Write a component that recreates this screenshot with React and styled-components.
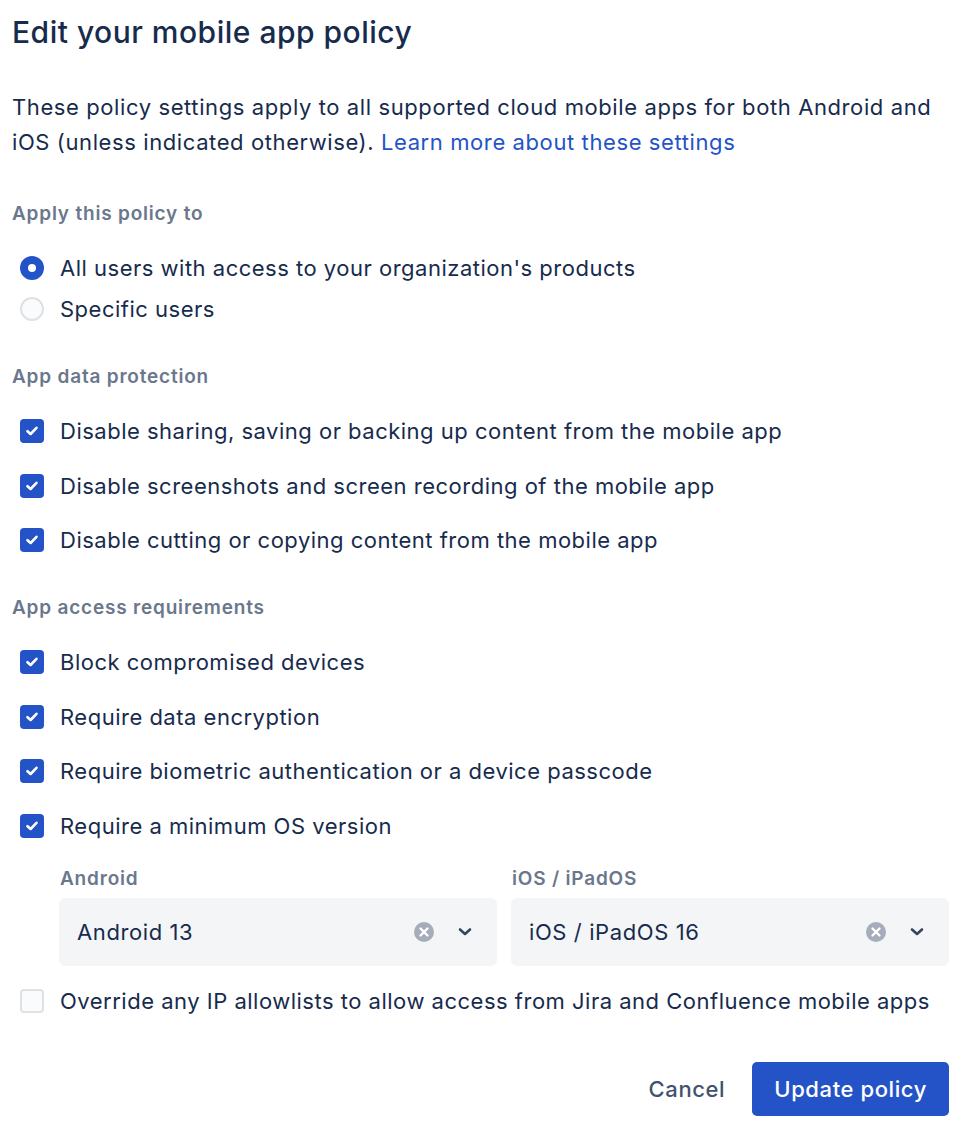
import React from "react";
import styled, { createGlobalStyle } from "styled-components";

const Global = createGlobalStyle`
  html, body { margin: 0; padding: 0; background: #fff; }
  body { font-family: Inter, "Noto Sans", sans-serif; color: #172B4D; -webkit-font-smoothing: antialiased; }
  * { box-sizing: border-box; }
`;

const Page = styled.div`
  width: 965px;
  padding: 14px 16px 0 12px;
  display: flex;
  flex-direction: column;
`;

const Title = styled.h1`
  margin: 0;
  font-size: 30px;
  line-height: 36px;
  font-weight: 500;
  letter-spacing: 0.5px;
  color: #172B4D;
`;

const Intro = styled.p`
  margin: 40px 0 0;
  font-size: 22px;
  line-height: 35px;
  letter-spacing: 0.6px;
  color: #172B4D;
`;

const Link = styled.a`
  color: #2453C8;
  text-decoration: none;
`;

const SectionHeading = styled.h2`
  margin: ${(p) => p.$top}px 0 0;
  font-size: 19px;
  line-height: 24px;
  font-weight: 600;
  letter-spacing: 0.8px;
  color: #6B778C;
`;

const Group = styled.div`
  display: flex;
  flex-direction: column;
  gap: ${(p) => p.$gap}px;
  margin-top: ${(p) => p.$top}px;
`;

const Row = styled.label`
  display: flex;
  align-items: center;
  gap: 16px;
  min-height: 40px;
  padding-left: 8px;
  font-size: 22px;
  line-height: 30px;
  letter-spacing: 0.5px;
  color: #172B4D;
`;

const RadioDot = styled.span`
  width: 24px;
  height: 24px;
  border-radius: 50%;
  flex: none;
  display: flex;
  align-items: center;
  justify-content: center;
  background: ${(p) => (p.$on ? "#2453C8" : "#FAFBFC")};
  border: ${(p) => (p.$on ? "none" : "2px solid #DFE1E6")};
  &::after {
    content: "";
    display: ${(p) => (p.$on ? "block" : "none")};
    width: 8px;
    height: 8px;
    border-radius: 50%;
    background: #fff;
  }
`;

const Box = styled.span`
  width: 24px;
  height: 24px;
  border-radius: 4px;
  flex: none;
  display: flex;
  align-items: center;
  justify-content: center;
  background: ${(p) => (p.$on ? "#2453C8" : "#FAFBFC")};
  border: ${(p) => (p.$on ? "none" : "2px solid #DFE1E6")};
`;

const OSGrid = styled.div`
  display: grid;
  grid-template-columns: 1fr 1fr;
  column-gap: 14px;
  margin: 21px 0 0 47px;
`;

const Field = styled.div`
  display: flex;
  flex-direction: column;
  gap: 7px;
`;

const FieldLabel = styled.div`
  font-size: 19px;
  line-height: 24px;
  font-weight: 600;
  letter-spacing: 0.8px;
  color: #6B778C;
  padding-left: 1px;
`;

const Select = styled.div`
  height: 68px;
  border-radius: 6px;
  background: #F4F5F7;
  display: flex;
  align-items: center;
  padding: 0 24px 0 18px;
  font-size: 22px;
  letter-spacing: 0.6px;
  color: #172B4D;
`;

const SelectValue = styled.span`
  flex: 1;
`;

const SelectIcons = styled.span`
  display: flex;
  align-items: center;
  gap: 22px;
`;

const Footer = styled.div`
  display: flex;
  justify-content: flex-end;
  align-items: center;
  gap: 13px;
  margin-top: 41px;
`;

const Button = styled.button`
  height: 54px;
  border: none;
  border-radius: 5px;
  font-family: inherit;
  font-size: 22px;
  font-weight: 500;
  letter-spacing: 0.6px;
  padding: ${(p) => (p.$primary ? "0 22px" : "0 14px")};
  background: ${(p) => (p.$primary ? "#2453C8" : "transparent")};
  color: ${(p) => (p.$primary ? "#fff" : "#42526E")};
  cursor: pointer;
`;

const Check = () => (
  <svg width="14" height="12" viewBox="0 0 14 12">
    <path d="M2.5 6.2 L5.6 9 L11.5 2.8" fill="none" stroke="#fff" strokeWidth="2.6" strokeLinecap="round" strokeLinejoin="round" />
  </svg>
);

const ClearIcon = () => (
  <svg width="22" height="22" viewBox="0 0 22 22">
    <circle cx="11" cy="11" r="10" fill="#A5ADBA" />
    <path d="M7.5 7.5 L14.5 14.5 M14.5 7.5 L7.5 14.5" stroke="#fff" strokeWidth="2.4" strokeLinecap="round" />
  </svg>
);

const Chevron = () => (
  <svg width="16" height="10" viewBox="0 0 16 10">
    <path d="M3 2.5 L8 7 L13 2.5" fill="none" stroke="#344563" strokeWidth="2.6" strokeLinecap="round" strokeLinejoin="round" />
  </svg>
);

const CheckRow = ({ on = true, children }) => (
  <Row>
    <Box $on={on}>{on && <Check />}</Box>
    <span>{children}</span>
  </Row>
);

const OSSelect = ({ label, value }) => (
  <Field>
    <FieldLabel>{label}</FieldLabel>
    <Select>
      <SelectValue>{value}</SelectValue>
      <SelectIcons>
        <ClearIcon />
        <Chevron />
      </SelectIcons>
    </Select>
  </Field>
);

export default function App() {
  return (
    <>
      <Global />
      <Page>
        <Title>Edit your mobile app policy</Title>
        <Intro>
          These policy settings apply to all supported cloud mobile apps for both Android and iOS (unless indicated
          otherwise). <Link href="#">Learn more about these settings</Link>
        </Intro>

        <SectionHeading $top={42}>Apply this policy to</SectionHeading>
        <Group $gap={1} $top={22}>
          <Row>
            <RadioDot $on />
            <span>All users with access to your organization's products</span>
          </Row>
          <Row>
            <RadioDot />
            <span>Specific users</span>
          </Row>
        </Group>

        <SectionHeading $top={36}>App data protection</SectionHeading>
        <Group $gap={14.5} $top={22}>
          <CheckRow>Disable sharing, saving or backing up content from the mobile app</CheckRow>
          <CheckRow>Disable screenshots and screen recording of the mobile app</CheckRow>
          <CheckRow>Disable cutting or copying content from the mobile app</CheckRow>
        </Group>

        <SectionHeading $top={36}>App access requirements</SectionHeading>
        <Group $gap={14.5} $top={22}>
          <CheckRow>Block compromised devices</CheckRow>
          <CheckRow>Require data encryption</CheckRow>
          <CheckRow>Require biometric authentication or a device passcode</CheckRow>
          <CheckRow>Require a minimum OS version</CheckRow>
        </Group>

        <OSGrid>
          <OSSelect label="Android" value="Android 13" />
          <OSSelect label="iOS / iPadOS" value="iOS / iPadOS 16" />
        </OSGrid>

        <Group $gap={0} $top={15}>
          <CheckRow on={false}>Override any IP allowlists to allow access from Jira and Confluence mobile apps</CheckRow>
        </Group>

        <Footer>
          <Button>Cancel</Button>
          <Button $primary>Update policy</Button>
        </Footer>
      </Page>
    </>
  );
}
